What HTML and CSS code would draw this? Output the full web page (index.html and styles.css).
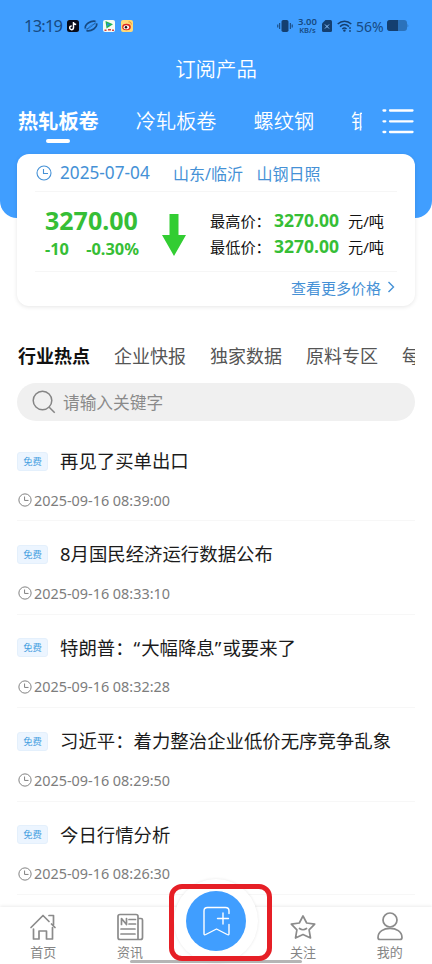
FILE: index.html
```html
<!DOCTYPE html>
<html lang="zh-CN">
<head>
<meta charset="utf-8">
<title>订阅产品</title>
<link rel="stylesheet" href="styles.css">
</head>
<body>
<svg class="defs" width="0" height="0">
  <symbol id="clock" viewBox="0 0 16 16"><circle cx="8" cy="8" r="7"/><path d="M7.500 4v4.500H12"/></symbol>
</svg>
<div class="app">
  <header class="hero">
    <div class="status">
      <span class="time">13:19</span>
      <svg class="apps" width="68" height="14" viewBox="0 0 68 14">
        <rect x="1" y="1" width="12" height="12" rx="2.500" fill="#080b18"/>
        <path d="M7.500 3v5.800a1.900 1.900 0 1 1-1.800-1.900M7.500 3c.2 1.600 1.200 2.400 2.700 2.500" fill="none" stroke="#fff" stroke-width="1.500"/>
        <g fill="none" stroke="#174a82"><path d="M19.300 9.500C18.500 5.500 24.500 1.300 29.500 2.300" stroke-width="1.600"/><path d="M30.700 4.500C31.500 8.500 25.500 12.700 20.500 11.700" stroke-width="1.600"/><path d="M19.500 10C23 9.500 27 7.500 29.800 2.500M20.500 11.700C23 7 27 4.800 30.700 4.500" stroke-width=".5"/></g>
        <rect x="37" y="1" width="12" height="12" rx="2" fill="#f4fbf5"/>
        <path d="M39.500 2l7.500 3.300-6.500 4.200z" fill="#22b35a"/><path d="M41 4.300l3 1-3 2z" fill="#2d8be8"/><path d="M38.500 11.300h2M42 10.800h3M46 11.300h2" stroke="#d6453c" stroke-width="1.500"/>
        <rect x="55" y="1" width="12" height="12" rx="2" fill="#ffd978"/>
        <ellipse cx="60.500" cy="8" rx="4.300" ry="3.200" fill="#d9281f"/><ellipse cx="60.300" cy="8.300" rx="2.800" ry="2" fill="#fff"/><circle cx="60" cy="8.300" r="1.200" fill="#111"/><path d="M62.500 3c2-.5 3 .8 2.700 2.500" fill="none" stroke="#ee8b22"/>
      </svg>
      <span class="spacer"></span>
      <svg class="vib" width="16" height="14" viewBox="0 0 16 14"><rect x="4.500" y="1" width="7" height="12" rx="1.800" fill="#143f70"/><path d="M2.700 4v6M.8 5.500v3M13.300 4v6M15.200 5.500v3" stroke="#143f70"/></svg>
      <span class="rate"><b>3.00</b><b>KB/s</b></span>
      <svg class="sim" width="10" height="12" viewBox="0 0 10 12"><path d="M3.500 0H8.500Q10 0 10 1.500v9Q10 12 8.500 12h-7Q0 12 0 10.500V3.500z" fill="#143f70"/><path d="M3 4.500l4 4M7 4.500l-4 4" stroke="#8ec5ff"/></svg>
      <svg class="wifi" width="15" height="12" viewBox="0 0 15 12"><path d="M.7 4c4-3.700 9.600-3.700 13.600 0M3 6.600c2.700-2.500 6.300-2.500 9 0M5.300 9c1.300-1.200 3-1.200 4.200 0" fill="none" stroke="#143f70" stroke-width="1.500"/><circle cx="7.400" cy="10.600" r="1.200" fill="#143f70"/><path d="M13 7v2M13 10v2" stroke="#143f70" stroke-width="1.300"/></svg>
      <span class="pct">56%</span>
      <svg class="bat" width="22" height="11" viewBox="0 0 22 11"><rect width="20" height="11" rx="3" fill="#2b72bb"/><path d="M3 0h8v11H3Q0 11 0 8V3Q0 0 3 0z" fill="#143f70"/><path d="M20.500 3.500q1.500 2 0 4z" fill="#2b72bb"/></svg>
    </div>
    <h1>订阅产品</h1>
    <nav class="products">
      <div class="product-list">
        <a class="on">热轧板卷</a><a>冷轧板卷</a><a>螺纹钢</a><a>钢坯</a>
      </div>
      <svg width="32" height="26" viewBox="0 0 32 26" fill="none" stroke="#fff" stroke-width="2.300" stroke-linecap="round"><path d="M1.500 2.500h1.800M8 2.500h22.500M1.500 13.300h1.800M8 13.300h22.500M1.500 24h1.800M8 24h22.500"/></svg>
    </nav>
  </header>

  <section class="card">
    <div class="card-head">
      <svg class="ic" width="16" height="16"><use href="#clock"/></svg>
      <span class="date">2025-07-04</span><span class="place">山东/临沂</span><span>山钢日照</span>
    </div>
    <div class="quote">
      <div class="price">
        <strong>3270.00</strong>
        <div class="delta"><b>-10</b><b>-0.30%</b></div>
      </div>
      <svg class="arrow" width="24" height="42" viewBox="0 0 24 42"><path d="M7.500 0h9v21H24L12 42 0 21h7.500z" fill="#32cd32"/></svg>
      <div class="range">
        <div><span>最高价：</span><b>3270.00</b><i>元/吨</i></div>
        <div><span>最低价：</span><b>3270.00</b><i>元/吨</i></div>
      </div>
    </div>
    <div class="more">查看更多价格<svg width="8" height="12" viewBox="0 0 8 12"><path d="M1.500 1l5 5-5 5" fill="none" stroke="#4591d6" stroke-width="1.400"/></svg></div>
  </section>

  <nav class="topics"><a class="on">行业热点</a><a>企业快报</a><a>独家数据</a><a>原料专区</a><a>每日</a></nav>

  <div class="search">
    <svg width="24" height="24" viewBox="0 0 24 24" fill="none" stroke="#858585" stroke-width="1.500"><circle cx="10.500" cy="10.500" r="9.300"/><path d="M17.200 17.200l5.500 5.500"/></svg>
    <span>请输入关键字</span>
  </div>

  <main class="news">
    <article><h2><em>免费</em><span>再见了买单出口</span></h2><p><svg class="ic" width="14" height="14"><use href="#clock"/></svg>2025-09-16 08:39:00</p></article>
    <article><h2><em>免费</em><span>8月国民经济运行数据公布</span></h2><p><svg class="ic" width="14" height="14"><use href="#clock"/></svg>2025-09-16 08:33:10</p></article>
    <article><h2><em>免费</em><span>特朗普：<q>“</q>大幅降息<q>”</q>或要来了</span></h2><p><svg class="ic" width="14" height="14"><use href="#clock"/></svg>2025-09-16 08:32:28</p></article>
    <article><h2><em>免费</em><span>习近平：着力整治企业低价无序竞争乱象</span></h2><p><svg class="ic" width="14" height="14"><use href="#clock"/></svg>2025-09-16 08:29:50</p></article>
    <article><h2><em>免费</em><span>今日行情分析</span></h2><p><svg class="ic" width="14" height="14"><use href="#clock"/></svg>2025-09-16 08:26:30</p></article>
  </main>

  <footer class="tabbar">
    <a><svg width="28" height="30" viewBox="0 0 28 30"><path d="M2 15.500L14 3.500l6 6M20 3.500H24.500v9M22.500 12l3.500 3.500M4.500 17v10H10v-8h7.500v8h6V15.500"/></svg>首页</a>
    <a><svg width="28" height="30" viewBox="0 0 28 30"><path d="M4 2.500h16q2 0 2 2v23H4q-2 0-2-2v-21q0-2 2-2zM22 6.500h3q1.500 0 1.500 1.500v17.500q0 2-2 2H22"/><path d="M5.500 12.500v-6l5 6v-6M13 7.500h6.500M13 12h6.500M5 17h14M5 22h14"/></svg>资讯</a>
    <a class="center"><span class="halo"><span class="disc"><svg width="30" height="34" viewBox="0 0 30 34"><path d="M24.500 3.500H6.500Q3 3.500 3 7v22.500q0 2 1.800 1L15.500 25l10.700 5.500q1.800 1 1.800-1V20.500M24.500 3.500q3.500 0 3.500 3.500v2.500M22 9v11M16.500 14.500h11"/></svg></span></span></a>
    <a><svg width="28" height="30" viewBox="0 0 28 30"><path d="M14 4l3.700 7 8 1.200-5.600 5.600L21.500 26 14 22.600 6.500 26l1.400-8.200L2.300 12.200l8-1.200z"/><path d="M10.500 16.500q3.500 2.500 7 0"/></svg>关注</a>
    <a><svg width="28" height="30" viewBox="0 0 28 30"><circle cx="14" cy="8" r="7"/><path d="M2 25.500C2 13.300 26 13.300 26 25.500q0 2-2 2h-20q-2 0-2-2z"/></svg>我的</a>
    <span class="homebar"></span>
    <span class="marker"></span>
  </footer>
</div>
</body>
</html>
```
FILE: styles.css
```css
* { box-sizing: border-box; margin: 0; padding: 0; }
body { width: 432px; height: 964px; overflow: hidden; background: #fff; font-family: "Noto Sans", "Noto Sans CJK SC", sans-serif; color: #1b1b1b; }
.defs { position: absolute; }
svg { display: block; flex: none; }
.app { height: 964px; display: flex; flex-direction: column; position: relative; }
.ic { fill: none; stroke: currentColor; stroke-width: 1.1; }

.hero { height: 218px; flex: none; background: #409eff; border-radius: 0 0 17px 17px; color: #fff; }
.status { height: 51px; padding: 0 23px 0 24px; display: flex; align-items: center; color: #174a82; }
.time { font-size: 16.5px; width: 42px; white-space: nowrap; letter-spacing: -.8px; }
.apps { margin-top: 1px; }
.spacer { flex: 1; }
.rate { width: 21px; margin: 0 4px 0 4px; display: flex; flex-direction: column; align-items: center; font-size: 9.5px; line-height: 9px; }
.rate b { font-weight: 600; }
.rate b + b { font-size: 7.5px; line-height: 9px; }
.sim { margin-right: 5px; }
.pct { font-size: 14px; width: 28px; margin: 1px 3px 0 4px; white-space: nowrap; }
h1 { font-size: 20.4px; line-height: 36px; font-weight: 350; text-align: center; }
.products { display: flex; align-items: center; height: 50px; margin-top: 10px; padding: 0 18px 0 18px; justify-content: space-between; }
.products > svg { margin-top: -2px; }
.product-list { width: 344px; display: flex; gap: 37px; overflow: hidden; font-size: 20.2px; line-height: 36px; height: 50px; white-space: nowrap; padding-top: 6px; font-weight: 350; }
.product-list a { display: flex; flex-direction: column; align-items: center; flex: none; }
.product-list .on { font-weight: 700; }
.product-list .on::after { content: ""; width: 24px; height: 4px; margin-top: 0; border-radius: 2px; background: #fff; }

.card { flex: none; width: 398px; height: 152px; margin: -64px 17px 0; background: #fff; border-radius: 12px; box-shadow: 0 1px 4px rgba(0,0,0,.1); padding: 0 18px; }
.card-head { height: 38px; display: flex; align-items: center; color: #4591d6; font-size: 16px; border-bottom: 1px solid #f6f6f6; white-space: nowrap; }
.card-head .ic { margin: 1px 0 0 1px; }
.date { font-size: 17.2px; width: 113px; margin-left: 8px; }
.place { width: 83.500px; }
.quote { height: 80px; display: flex; border-bottom: 1px solid #f6f6f6; padding-left: 10px; }
.price { width: 117px; color: #36be36; }
.price strong { display: block; font-size: 25px; line-height: 30px; margin-top: 13px; }
.delta { display: flex; justify-content: space-between; width: 94px; font-size: 16.4px; line-height: 22px; margin-top: 3px; }
.arrow { margin-top: 22px; }
.range { margin: 15px 0 0 24px; font-size: 15.2px; color: #111; }
.range div { display: flex; align-items: center; height: 26px; white-space: nowrap; }
.range span { width: 64px; }
.range b { color: #36be36; font-size: 17.5px; width: 74px; }
.range i { font-style: normal; }
.more { height: 30px; display: flex; align-items: center; justify-content: flex-end; gap: 6px; color: #4591d6; font-size: 15px; padding-right: 2px; }

.topics { display: flex; gap: 24px; margin: 32px 17px 0 18px; height: 36px; line-height: 36px; font-size: 18px; color: #555; overflow: hidden; white-space: nowrap; flex: none; }
.topics a { flex: none; }
.topics .on { font-weight: 700; color: #111; }
.search { flex: none; height: 38px; margin: 9px 17px 0; border-radius: 19px; background: #f0f0f0; display: flex; align-items: center; padding-left: 15px; gap: 7px; color: #8a8a8a; font-size: 16.7px; }

.news { padding: 7px 17px 0; }
article { height: 93.4px; padding-top: 19px; border-bottom: 1px solid #f7f7f7; }
h2 { display: flex; align-items: center; gap: 12px; height: 28px; font-size: 18.4px; line-height: 26px; font-weight: 400; white-space: nowrap; }
em { width: 31px; height: 19px; flex: none; border-radius: 3px; border: 1px solid #e4f0fc; background: #ecf5ff; color: #459fdf; font-size: 9.3px; line-height: 17px; text-align: center; font-style: normal; }
q { quotes: none; letter-spacing: 1px; }
article p { display: flex; align-items: center; gap: 2px; height: 20px; margin: 15px 0 0 1px; font-size: 14.4px; color: #7d7d7d; white-space: nowrap; }

.tabbar { position: absolute; left: 0; right: 0; bottom: 0; height: 57px; background: #fff; box-shadow: 0 -1px 3px rgba(0,0,0,.08); display: grid; grid-template-columns: repeat(5, 86.600px); }
.tabbar a { display: flex; flex-direction: column; align-items: center; font-size: 13px; line-height: 20px; color: #858585; padding-top: 5px; }
.tabbar svg { fill: none; stroke: #8b8b8b; stroke-width: 1.7; stroke-linejoin: round; stroke-linecap: round; }
.halo { flex: none; width: 84px; height: 84px; margin: -33px 1px 0 0; border-radius: 50%; background: #fff; box-shadow: 0 0 3px rgba(0,0,0,.1); display: grid; place-items: center; }
.disc { width: 60px; height: 60px; border-radius: 50%; background: #409eff; display: grid; place-items: center; }
.tabbar .disc svg { stroke: #fff; stroke-width: 1.4; }
.homebar { position: absolute; left: 130px; width: 172px; top: 53px; height: 3px; border-radius: 2px; background: #b5b5b5; }
.marker { position: absolute; left: 169px; top: -23px; width: 103px; height: 77px; border: 5px solid #e61f26; border-radius: 13px; }
```
